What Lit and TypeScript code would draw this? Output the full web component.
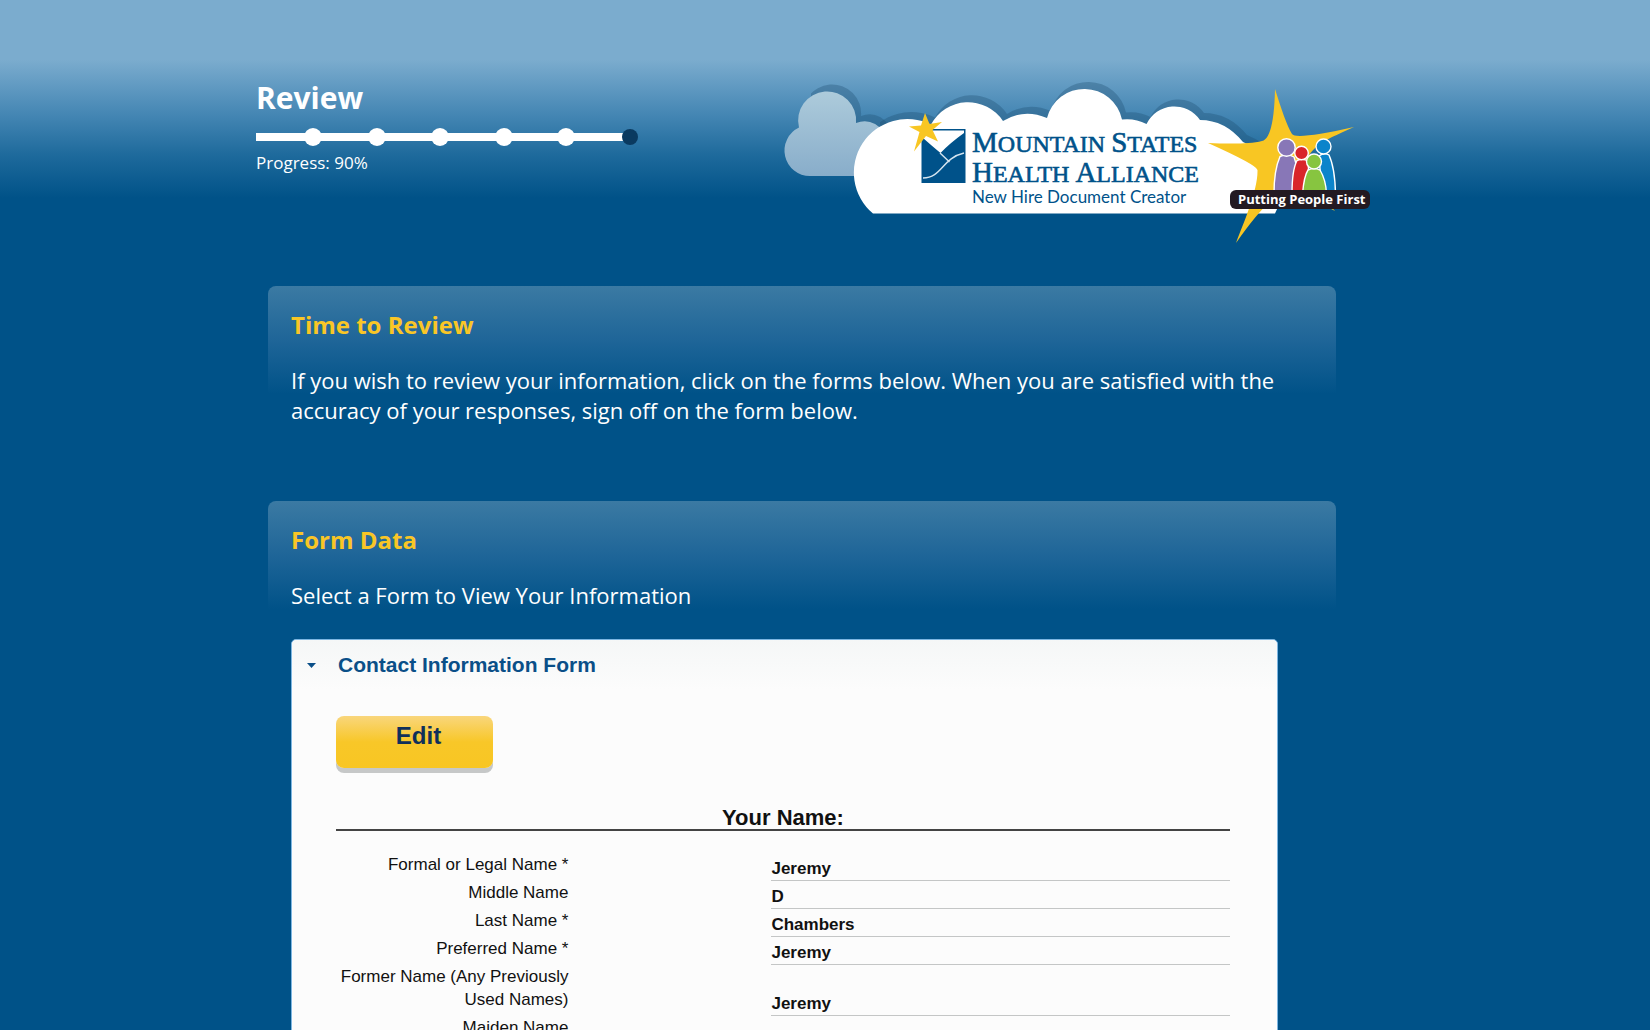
import { LitElement, html, css, svg } from "lit";
import { customElement, state } from "lit/decorators.js";

interface Field {
  label: string;
  value: string;
}

const NAME_FIELDS: Field[] = [
  { label: "Formal or Legal Name *", value: "Jeremy" },
  { label: "Middle Name", value: "D" },
  { label: "Last Name *", value: "Chambers" },
  { label: "Preferred Name *", value: "Jeremy" },
  { label: "Former Name (Any Previously Used Names)", value: "Jeremy" },
  { label: "Maiden Name", value: "" },
];

const STEPS = [57, 121, 184, 248, 310];

@customElement("progress-track")
class ProgressTrack extends LitElement {
  static styles = css`
    :host {
      display: block;
    }
    .track {
      display: block;
    }
    .done {
      fill: #fff;
    }
    .current {
      fill: #0a3a60;
    }
  `;

  render() {
    return html`
      <svg class="track" width="384" height="18" viewBox="0 0 384 18" role="img" aria-label="Step 6 of 6">
        <rect class="done" x="0" y="5" width="368" height="8"></rect>
        ${STEPS.map((x) => svg`<circle class="done" cx=${x} cy="9" r="9"></circle>`)}
        <circle class="current" cx="374" cy="9" r="8"></circle>
      </svg>
    `;
  }
}

@customElement("brand-logo")
class BrandLogo extends LitElement {
  static styles = css`
    :host {
      display: block;
    }
    .logo {
      display: block;
      overflow: visible;
    }
    .shade {
      fill: #1c4a6c;
      fill-opacity: 0.32;
    }
    .near {
      fill: #fff;
    }
    .blue {
      fill: #00528a;
    }
    .gold {
      fill: #f8c623;
    }
    .line {
      fill: none;
      stroke: #d5e5f0;
      stroke-width: 1.4;
    }
    .name {
      font-family: "Liberation Serif", serif;
      fill: #00528a;
      stroke: #00528a;
      stroke-width: 0.6;
      font-size: 24px;
    }
    .cap {
      font-size: 29px;
    }
    .sub {
      font-family: Lato, sans-serif;
      font-size: 17px;
      fill: #00528a;
    }
    .tag {
      font-family: "Open Sans", sans-serif;
      font-weight: 700;
      font-size: 13px;
      fill: #fff;
    }
    .person {
      stroke: #fff;
      stroke-width: 1.4;
    }
    .purple {
      fill: #8877b7;
    }
    .red {
      fill: #d9252a;
    }
    .green {
      fill: #87c540;
    }
    .sky {
      fill: #0b84cb;
    }
    .banner {
      fill: #231a22;
    }
  `;

  render() {
    const far = "M810 176A25.5 25.5 0 0 1 799 127.500A29 29 0 1 1 856 123Q872 117 884 132V176Z";
    const near =
      "M873 213.500A53.5 53.5 0 0 1 931 124.500A42 42 0 0 1 1003 121Q1024 108 1047 118A38.500 38.500 0 0 1 1122 119.500Q1135 118 1146.500 124A31 31 0 0 1 1200 120Q1225 120 1243 142Q1285 160 1283 196L1275 213.500Z";
    return html`
      <svg class="logo" width="586" height="170" viewBox="784 76 586 170" role="img"
        aria-label="Mountain States Health Alliance, New Hire Document Creator, Putting People First">
        <defs>
          <clipPath id="farClip">
            <path d="M806 76H900V127L874 145L862 150H806Z"></path>
          </clipPath>
          <clipPath id="nearClip">
            <path d="M876 76H1260V150H900L876 132Z"></path>
          </clipPath>
          <linearGradient id="farFill" x1="0" y1="0" x2="0" y2="1">
            <stop offset="0" stop-color="#adcbdb"></stop>
            <stop offset="1" stop-color="#88adca"></stop>
          </linearGradient>
        </defs>
        <path class="shade" clip-path="url(#farClip)" d=${far} transform="translate(5 -7)"></path>
        <path fill="url(#farFill)" d=${far}></path>
        <path class="shade" clip-path="url(#nearClip)" d=${near} transform="translate(4 -7)"></path>
        <path class="near" d=${near}></path>

        <rect class="blue" x="921.500" y="129" width="44" height="54"></rect>
        <path class="near" d="M923 130.500H964V133Q950 143 940.500 153Q932 146 923 138Z"></path>
        <path class="line" d="M940 153L949.500 162M923 178C942 178 942 158 964 153"></path>
        <path class="gold"
          d="M925 113L929.500 124L942 122L932.500 130L938 141.500L926 136L914 151.500L919.500 132L909 126.500L921 125.500Z"></path>

        <text class="name" x="972" y="152"><tspan class="cap">M</tspan>OUNTAIN <tspan class="cap">S</tspan>TATES</text>
        <text class="name" x="972" y="182"><tspan class="cap">H</tspan>EALTH <tspan class="cap">A</tspan>LLIANCE</text>
        <text class="sub" x="972" y="203">New Hire Document Creator</text>

        <path class="gold"
          d="M1275 89C1281 108 1287 126 1292 134Q1296 140 1354 127C1330 138 1308 146 1306 165C1306 180 1325 200 1335 211Q1312 198 1285 190Q1266 200 1236 243C1244 222 1258 190 1257.500 170Q1257 165 1208 143C1230 144 1250 144 1262 141Q1274 138 1275 89Z"></path>
        <path class="person sky" d="M1319 156Q1324 152 1329 155Q1335 168 1335.500 194H1322Z"></path>
        <circle class="person sky" cx="1323.500" cy="146.500" r="7.500"></circle>
        <path class="person purple" d="M1274 194Q1274 170 1280 156.500Q1287 153 1294 157Q1299 170 1299 194Z"></path>
        <circle class="person purple" cx="1286.500" cy="147.500" r="8.700"></circle>
        <path class="person red" d="M1292 194Q1292 170 1297 160.500Q1303 158 1308 161L1310 194Z"></path>
        <circle class="person red" cx="1301.500" cy="153" r="6.800"></circle>
        <path class="person green" d="M1302.500 194Q1304 176 1308 170Q1314 167 1320 170Q1326 180 1326.500 194Z"></path>
        <circle class="person green" cx="1314" cy="161.500" r="7.500"></circle>
        <rect class="banner" x="1230" y="190" width="140" height="19" rx="6"></rect>
        <text class="tag" x="1238" y="204">Putting People First</text>
      </svg>
    `;
  }
}

@customElement("app-root")
class AppRoot extends LitElement {
  static styles = css`
    :host {
      display: block;
      height: 100vh;
      overflow-y: auto;
      scrollbar-width: none;
      background: #005288;
      color: #fff;
      font-family: "Open Sans", sans-serif;
    }
    .page {
      box-sizing: border-box;
      min-height: 100%;
      padding: 76px 24px 40px;
      background: linear-gradient(#7bacce 0, #7bacce 60px, #4788b5 112px, #1e6a9c 155px, #005288 198px) no-repeat;
    }
    .wrap {
      max-width: 1138px;
      margin: 0 auto;
    }
    .head {
      display: flex;
      justify-content: space-between;
      align-items: flex-start;
      padding-right: 24px;
      margin-bottom: 40px;
    }
    h1 {
      margin: 2px 0 10px;
      font-size: 30px;
      line-height: 40px;
    }
    .status {
      margin: 5px 0 0;
      font-size: 17px;
      line-height: 24px;
    }
    .panel {
      box-sizing: border-box;
      max-width: 1068px;
      margin-left: 12px;
      padding: 23px 58px 0 23px;
      border-radius: 8px;
      background: linear-gradient(#3b7aa3, #1e6598 55px, #005288 108px) no-repeat;
    }
    .intro {
      padding-bottom: 76px;
    }
    h2 {
      margin: 0 0 24px;
      font-size: 24px;
      line-height: 32px;
      color: #f9c626;
    }
    .copy {
      margin: 0;
      font-size: 22px;
      line-height: 30px;
    }
    .card {
      margin-top: 29px;
      border: 1px solid #7db6e2;
      border-radius: 5px;
      background: #fcfcfc;
      color: #111;
      font-family: "Liberation Sans", sans-serif;
    }
    h3 {
      margin: 0;
    }
    .toggle {
      display: flex;
      align-items: center;
      gap: 22px;
      width: 100%;
      height: 50px;
      padding: 0 15px;
      border: 0;
      border-radius: 5px 5px 0 0;
      background: linear-gradient(#f5f7f7, #fcfcfc);
      color: #0a4f88;
      font: 700 21px/24px "Liberation Sans", sans-serif;
      text-align: left;
    }
    .arrow {
      fill: #0a4f88;
    }
    .body {
      padding: 26px 47px 40px 44px;
    }
    .edit {
      display: block;
      width: 157px;
      height: 52px;
      margin-bottom: 39px;
      padding: 0 0 12px 8px;
      border: 0;
      border-radius: 8px;
      background: linear-gradient(#f9d67c, #f8c728 50%, #f8c623);
      box-shadow: 0 5px 0 #c6c8c8;
      color: #10305a;
      font: 700 24px/28px "Liberation Sans", sans-serif;
    }
    .fields {
      width: 100%;
      border-collapse: collapse;
      table-layout: fixed;
      font-size: 17px;
      line-height: 23px;
    }
    caption {
      margin-bottom: 22px;
      border-bottom: 2px solid #444;
      font-size: 22px;
      line-height: 22px;
      font-weight: 700;
      color: #111;
    }
    th {
      width: 26%;
      padding: 0 0 5px;
      font-weight: 400;
      text-align: right;
      vertical-align: top;
    }
    td {
      padding: 0 0 0 203px;
      vertical-align: bottom;
      font-weight: 700;
    }
    .value {
      display: block;
      min-height: 23px;
      border-bottom: 1px solid #c4c6c6;
    }
  `;

  @state() private open = true;

  private toggle() {
    this.open = !this.open;
  }

  render() {
    return html`
      <main class="page">
        <div class="wrap">
          <header class="head">
            <div>
              <h1>Review</h1>
              <progress-track></progress-track>
              <p class="status">Progress: 90%</p>
            </div>
            <brand-logo></brand-logo>
          </header>

          <section class="panel intro">
            <h2>Time to Review</h2>
            <p class="copy">
              If you wish to review your information, click on the forms below. When you are satisfied with the
              accuracy of your responses, sign off on the form below.
            </p>
          </section>

          <section class="panel">
            <h2>Form Data</h2>
            <p class="copy">Select a Form to View Your Information</p>
            <div class="card">
              <h3>
                <button class="toggle" type="button" aria-expanded=${this.open} @click=${this.toggle}>
                  <svg class="arrow" width="9" height="5" viewBox="0 0 9 5" aria-hidden="true">
                    <path d="M0 0H9L4.500 5Z"></path>
                  </svg>
                  Contact Information Form
                </button>
              </h3>
              ${this.open
                ? html`<div class="body">
                    <button class="edit" type="button">Edit</button>
                    <table class="fields">
                      <caption>Your Name:</caption>
                      <tbody>
                        ${NAME_FIELDS.map(
                          (f) => html`<tr>
                            <th scope="row">${f.label}</th>
                            <td><span class="value">${f.value}</span></td>
                          </tr>`
                        )}
                      </tbody>
                    </table>
                  </div>`
                : ""}
            </div>
          </section>
        </div>
      </main>
    `;
  }
}
